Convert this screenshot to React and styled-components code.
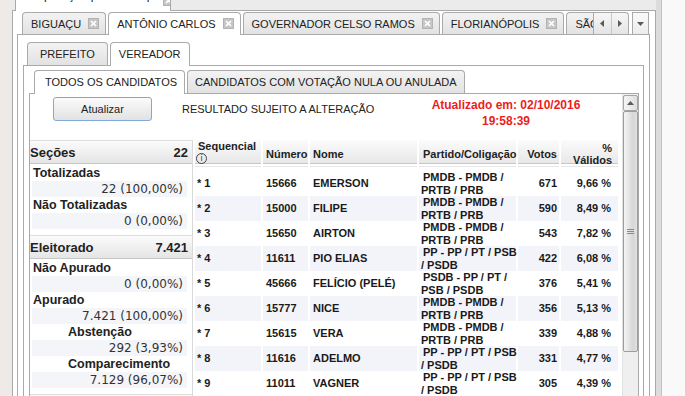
import React from 'react';
import styled, { createGlobalStyle } from 'styled-components';

const Global = createGlobalStyle`
  html, body { margin: 0; padding: 0; background: #edeae7; }
  body { font-family: "Liberation Sans", Arial, sans-serif; }
  * { box-sizing: border-box; }
`;

const Page = styled.div`
  display: flex;
  width: 685px;
  height: 396px;
  overflow: hidden;
  background: #edeae7;
`;

const Gutter = styled.div`
  width: 12px;
  flex: none;
`;

const Outer = styled.div`
  width: 644px;
  flex: none;
  display: flex;
  flex-direction: column;
`;

const OuterNav = styled.div`
  height: 11px;
  flex: none;
  display: flex;
  padding-left: 3px;
  background: #ebebeb;
  border-bottom: 1px solid #a9a9a9;
  position: relative;
  z-index: 1;
`;

const OuterTab = styled.div`
  width: 156px;
  height: 11px;
  display: flex;
  align-items: flex-end;
  justify-content: space-between;
  padding: 0 6px 9px 20px;
  background: #fff;
  border-left: 1px solid #a9a9a9;
  border-right: 1px solid #a9a9a9;
  overflow: hidden;
  font-size: 12px;
  line-height: 14px;
  color: #222;
  white-space: nowrap;
`;

const OuterClose = styled.span`
  display: inline-flex;
  margin-bottom: -4px;
`;

const OuterBody = styled.div`
  flex: 1;
  min-height: 0;
  display: flex;
  flex-direction: column;
  background: #fff;
  border-left: 1px solid #a9a9a9;
  border-right: 1px solid #a9a9a9;
  padding: 1px 5px 0 4px;
`;

const RightBand = styled.div`
  width: 6px;
  flex: none;
  background: #dcdcdc;
  border-right: 1px solid #c2c2c2;
`;

const RightFill = styled.div`
  flex: 1;
  background: #f9f9f9;
`;

const TabSet = styled.div`
  flex: 1;
  min-height: 0;
  display: flex;
  flex-direction: column;
`;

const NavRow = styled.div`
  position: relative;
  z-index: 1;
  flex: none;
  display: flex;
  height: ${p => p.$h}px;
  padding-left: ${p => p.$indent}px;
  padding-right: ${p => p.$end || 0}px;
`;

const TabList = styled.div`
  flex: 1;
  min-width: 0;
  height: calc(100% + 1px);
  display: flex;
  align-items: flex-start;
  overflow: hidden;
`;

const Tab = styled.div`
  flex: none;
  display: flex;
  align-items: center;
  height: ${p => (p.$active ? p.$h + 1 : p.$h)}px;
  padding: 0 ${p => p.$pr}px ${p => (p.$active ? 1 : 0)}px ${p => p.$pl}px;
  margin-right: 2px;
  border: 1px solid #aaaaaa;
  border-bottom: none;
  border-radius: 4px 4px 0 0;
  background: ${p => (p.$active ? '#ffffff' : 'linear-gradient(to bottom, #f3f3f3, #e2e2e2)')};
  font-size: 11px;
  color: #222;
  white-space: nowrap;
`;

const CloseBox = styled.span`
  display: inline-flex;
  margin-left: ${p => p.$gap}px;
`;

const TabPanel = styled.div`
  flex: 1;
  min-height: 0;
  display: flex;
  flex-direction: column;
  background: #fff;
  border: 1px solid #aaaaaa;
  border-bottom: none;
  padding: ${p => p.$pad};
`;

const ScrollArrows = styled.div`
  position: absolute;
  left: 576px;
  top: 0;
  width: 36px;
  height: 22px;
  display: flex;
  border: 1px solid #aaaaaa;
  border-bottom: none;
  border-radius: 0 4px 0 0;
  background: linear-gradient(to bottom, #f6f6f6, #e4e4e4);
`;

const ArrowHalf = styled.div`
  flex: 1;
  display: flex;
  align-items: center;
  justify-content: center;
  border-left: ${p => (p.$sep ? '1px solid #c8c8c8' : 'none')};
`;

const MenuButton = styled.div`
  position: absolute;
  left: 615px;
  top: 0;
  width: 17px;
  height: 22px;
  display: flex;
  align-items: center;
  justify-content: center;
  border: 1px solid #aaaaaa;
  border-bottom: none;
  background: linear-gradient(to bottom, #fafafa, #ececec);
`;

const ScrollView = styled.div`
  flex: 1;
  min-height: 0;
  display: flex;
`;

const ScrollContent = styled.div`
  flex: 1;
  min-width: 0;
  overflow: hidden;
  display: flex;
  flex-direction: column;
`;

const TopBar = styled.div`
  height: 46px;
  flex: none;
  display: flex;
  align-items: flex-start;
  padding: 3px 0 0 23px;
`;

const Button = styled.button`
  width: 99px;
  height: 24px;
  flex: none;
  border: 1px solid #7ea9d9;
  border-radius: 3px;
  background: linear-gradient(to bottom, #fbfbfb, #e2e2e2);
  font-family: "Liberation Sans", Arial, sans-serif;
  font-size: 11px;
  color: #222;
  padding: 0;
`;

const Notice = styled.div`
  margin-left: 30px;
  line-height: 24px;
  font-size: 11px;
  color: #222;
  white-space: nowrap;
`;

const Updated = styled.div`
  width: 180px;
  margin-left: auto;
  margin-right: 26px;
  text-align: center;
  color: #ee1d1d;
  font-weight: bold;
  font-size: 12px;
  line-height: 16px;
`;

const Main = styled.div`
  flex: 1;
  display: flex;
  align-items: flex-start;
`;

const Stats = styled.div`
  width: 163px;
  flex: none;
  align-self: stretch;
  border-right: 1px solid #d9d9d9;
`;

const StatHeader = styled.div`
  height: 24px;
  display: flex;
  justify-content: space-between;
  align-items: center;
  padding-right: 4px;
  border-top: 1px solid #dddddd;
  border-bottom: 1px solid #c6c6c6;
  background: linear-gradient(to bottom, #fbfbfb, #e5e5e5);
  font-weight: bold;
  font-size: 13px;
  color: #222;
`;

const StatGroup = styled.div`
  padding: 1px 5px 6px 2px;
`;

const StatLabel = styled.div`
  height: 16px;
  line-height: 16px;
  padding-left: ${p => (p.$indent ? 36 : 1)}px;
  font-weight: bold;
  font-size: 12.5px;
  color: #222;
  white-space: nowrap;
`;

const StatValue = styled.div`
  height: 16px;
  line-height: 16px;
  padding-right: 4px;
  text-align: right;
  background: #f3f5f9;
  font-family: "DejaVu Sans", Verdana, sans-serif;
  font-size: 12px;
  color: #333;
`;

const Table = styled.table`
  table-layout: fixed;
  width: 427px;
  flex: none;
  border-collapse: separate;
  border-spacing: 2px 0;
  font-family: "Liberation Sans", Arial, sans-serif;
  font-weight: bold;
  font-size: 11px;
  color: #1a1a1a;
`;

const Col = styled.col`
  width: ${p => p.$w}px;
`;

const HeadCell = styled.th`
  height: 24px;
  padding: 0 ${p => p.$pr || 0}px ${p => p.$pb ?? 2}px ${p => p.$pl ?? 3}px;
  vertical-align: bottom;
  text-align: ${p => p.$align || 'left'};
  background: linear-gradient(to bottom, #fbfbfb, #e8e8e8);
  border-bottom: 1px solid #c6c6c6;
  line-height: 13px;
  font-weight: bold;
  color: #222;
  white-space: nowrap;
`;

const HeadStack = styled.div`
  line-height: 12px;
  margin-bottom: ${p => p.$sink}px;
`;

const SpacerCell = styled.td`
  height: 7px;
  padding: 0;
  background: linear-gradient(to bottom, #fff 0 2px, #e6e6e6 2px 3px, #fff 3px);
`;

const Cell = styled.td`
  height: 25px;
  padding: 0 ${p => p.$pr || 0}px 0 ${p => p.$pl ?? 3}px;
  vertical-align: middle;
  text-align: ${p => p.$align || 'left'};
  line-height: 12.5px;
  white-space: nowrap;
  background: ${p => (p.$alt ? '#f2f4fa' : '#ffffff')};
`;

const Line = styled.span`
  display: block;
  padding-left: ${p => p.$indent || 0}px;
`;

const InfoIcon = styled.span`
  display: block;
  width: 11px;
  height: 11px;
  margin: 1px 0 0 -2px;
  border: 1px solid #444;
  border-radius: 50%;
  font-family: "DejaVu Sans", sans-serif;
  font-weight: normal;
  font-size: 8px;
  line-height: 9px;
  text-align: center;
  color: #333;
`;

const Scrollbar = styled.div`
  width: 16px;
  flex: none;
  display: flex;
  flex-direction: column;
  padding-top: 1px;
  background: #efefef;
  border-left: 1px solid #e2e2e2;
`;

const ScrollButton = styled.div`
  height: 16px;
  flex: none;
  display: flex;
  align-items: center;
  justify-content: center;
  border: 1px solid #a6a6a6;
  border-radius: 2px;
  background: linear-gradient(to right, #f5f5f5, #dedede);
`;

const Thumb = styled.div`
  height: 241px;
  flex: none;
  display: flex;
  align-items: center;
  justify-content: center;
  border: 1px solid #9c9c9c;
  border-radius: 2px;
  background: linear-gradient(to right, #f4f4f4 0%, #e6e6e6 35%, #d6d6d6 70%, #e2e2e2 100%);
`;

const CloseIcon = () => (
  <svg width="11" height="11" viewBox="0 0 11 11">
    <rect x="0.5" y="0.5" width="10" height="10" fill="#c6c6c6" stroke="#b3b3b3" />
    <path d="M3 3 L8 8 M8 3 L3 8" stroke="#ffffff" strokeWidth="1.7" />
  </svg>
);

const Tri = ({ dir }) => {
  const d = {
    left: 'M4 0 L0 3.5 L4 7 Z',
    right: 'M0 0 L4 3.5 L0 7 Z',
    down: 'M0 0 L7 0 L3.5 4 Z',
    up: 'M0 4 L7 4 L3.5 0 Z',
  }[dir];
  const horiz = dir === 'left' || dir === 'right';
  return (
    <svg width={horiz ? 4 : 7} height={horiz ? 7 : 4} viewBox={horiz ? '0 0 4 7' : '0 0 7 4'}>
      <path d={d} fill="#5a5a5a" />
    </svg>
  );
};

const Grip = () => (
  <svg width="7" height="6" viewBox="0 0 7 6">
    <path d="M0 0.5 H7 M0 2.5 H7 M0 4.5 H7" stroke="#8a8a8a" strokeWidth="1" />
  </svg>
);

const cities = [
  { name: 'BIGUAÇU' },
  { name: 'ANTÔNIO CARLOS', active: true },
  { name: 'GOVERNADOR CELSO RAMOS' },
  { name: 'FLORIANÓPOLIS' },
  { name: 'SÃO JOSÉ' },
];

const PMDB = ['PMDB - PMDB /', 'PRTB / PRB'];
const PP = ['PP - PP / PT / PSB', '/ PSDB'];

const rows = [
  ['1', '15666', 'EMERSON', PMDB, '671', '9,66 %'],
  ['2', '15000', 'FILIPE', PMDB, '590', '8,49 %'],
  ['3', '15650', 'AIRTON', PMDB, '543', '7,82 %'],
  ['4', '11611', 'PIO ELIAS', PP, '422', '6,08 %'],
  ['5', '45666', 'FELÍCIO (PELÉ)', ['PSDB - PP / PT /', 'PSB / PSDB'], '376', '5,41 %'],
  ['6', '15777', 'NICE', PMDB, '356', '5,13 %'],
  ['7', '15615', 'VERA', PMDB, '339', '4,88 %'],
  ['8', '11616', 'ADELMO', PP, '331', '4,77 %'],
  ['9', '11011', 'VAGNER', PP, '305', '4,39 %'],
];

export default function App() {
  return (
    <>
      <Global />
      <Page>
        <Gutter />
        <Outer>
          <OuterNav>
            <OuterTab>
              <span>Apuração por município</span>
              <OuterClose>
                <CloseIcon />
              </OuterClose>
            </OuterTab>
          </OuterNav>
          <OuterBody>
            <TabSet>
              <NavRow $h={22} $indent={5} $end={57}>
                <TabList>
                  {cities.map(c => (
                    <Tab key={c.name} $h={22} $active={c.active} $pl={8} $pr={6}>
                      {c.name}
                      <CloseBox $gap={7}>
                        <CloseIcon />
                      </CloseBox>
                    </Tab>
                  ))}
                </TabList>
                <ScrollArrows>
                  <ArrowHalf>
                    <Tri dir="left" />
                  </ArrowHalf>
                  <ArrowHalf $sep>
                    <Tri dir="right" />
                  </ArrowHalf>
                </ScrollArrows>
                <MenuButton>
                  <Tri dir="down" />
                </MenuButton>
              </NavRow>
              <TabPanel $pad="7px 5px 0 5px">
                <TabSet>
                  <NavRow $h={23} $indent={4}>
                    <TabList>
                      <Tab $h={23} $pl={12} $pr={12}>PREFEITO</Tab>
                      <Tab $h={23} $active $pl={8} $pr={8}>VEREADOR</Tab>
                    </TabList>
                  </NavRow>
                  <TabPanel $pad="4px 4px 0 5px">
                    <TabSet>
                      <NavRow $h={23} $indent={5}>
                        <TabList>
                          <Tab $h={23} $active $pl={10} $pr={7}>TODOS OS CANDIDATOS</Tab>
                          <Tab $h={23} $pl={7} $pr={7}>CANDIDATOS COM VOTAÇÃO NULA OU ANULADA</Tab>
                        </TabList>
                      </NavRow>
                      <TabPanel $pad="0">
                        <ScrollView>
                          <ScrollContent>
                            <TopBar>
                              <Button>Atualizar</Button>
                              <Notice>RESULTADO SUJEITO A ALTERAÇÃO</Notice>
                              <Updated>
                                Atualizado em: 02/10/2016
                                <br />
                                19:58:39
                              </Updated>
                            </TopBar>
                            <Main>
                              <Stats>
                                <StatHeader>
                                  <span>Seções</span>
                                  <span>22</span>
                                </StatHeader>
                                <StatGroup>
                                  <StatLabel>Totalizadas</StatLabel>
                                  <StatValue>22 (100,00%)</StatValue>
                                  <StatLabel>Não Totalizadas</StatLabel>
                                  <StatValue>0 (0,00%)</StatValue>
                                </StatGroup>
                                <StatHeader>
                                  <span>Eleitorado</span>
                                  <span>7.421</span>
                                </StatHeader>
                                <StatGroup>
                                  <StatLabel>Não Apurado</StatLabel>
                                  <StatValue>0 (0,00%)</StatValue>
                                  <StatLabel>Apurado</StatLabel>
                                  <StatValue>7.421 (100,00%)</StatValue>
                                  <StatLabel $indent>Abstenção</StatLabel>
                                  <StatValue>292 (3,93%)</StatValue>
                                  <StatLabel $indent>Comparecimento</StatLabel>
                                  <StatValue>7.129 (96,07%)</StatValue>
                                </StatGroup>
                                <StatHeader />
                              </Stats>
                              <Table>
                                <colgroup>
                                  <Col $w={66} />
                                  <Col $w={45} />
                                  <Col $w={107} />
                                  <Col $w={97} />
                                  <Col $w={41} />
                                  <Col $w={57} />
                                </colgroup>
                                <thead>
                                  <tr>
                                    <HeadCell $pl={3} $pb={0}>
                                      <HeadStack $sink={-1}>
                                        Sequencial
                                        <InfoIcon>i</InfoIcon>
                                      </HeadStack>
                                    </HeadCell>
                                    <HeadCell>Número</HeadCell>
                                    <HeadCell>Nome</HeadCell>
                                    <HeadCell $pl={4}>Partido/Coligação</HeadCell>
                                    <HeadCell $align="right" $pr={2}>Votos</HeadCell>
                                    <HeadCell $align="right" $pr={6} $pb={0}>
                                      <HeadStack $sink={-3}>
                                        %
                                        <br />
                                        Válidos
                                      </HeadStack>
                                    </HeadCell>
                                  </tr>
                                  <tr>
                                    <SpacerCell />
                                    <SpacerCell />
                                    <SpacerCell />
                                    <SpacerCell />
                                    <SpacerCell />
                                    <SpacerCell />
                                  </tr>
                                </thead>
                                <tbody>
                                  {rows.map((r, i) => {
                                    const alt = i % 2 === 1;
                                    return (
                                      <tr key={r[0]}>
                                        <Cell $alt={alt} $pl={2}>* {r[0]}</Cell>
                                        <Cell $alt={alt}>{r[1]}</Cell>
                                        <Cell $alt={alt}>{r[2]}</Cell>
                                        <Cell $alt={alt} $pl={2}>
                                          <Line $indent={2}>{r[3][0]}</Line>
                                          <Line>{r[3][1]}</Line>
                                        </Cell>
                                        <Cell $alt={alt} $align="right" $pr={2}>{r[4]}</Cell>
                                        <Cell $alt={alt} $align="right" $pr={7}>{r[5]}</Cell>
                                      </tr>
                                    );
                                  })}
                                </tbody>
                              </Table>
                            </Main>
                          </ScrollContent>
                          <Scrollbar>
                            <ScrollButton>
                              <Tri dir="up" />
                            </ScrollButton>
                            <Thumb>
                              <Grip />
                            </Thumb>
                          </Scrollbar>
                        </ScrollView>
                      </TabPanel>
                    </TabSet>
                  </TabPanel>
                </TabSet>
              </TabPanel>
            </TabSet>
          </OuterBody>
        </Outer>
        <RightBand />
        <RightFill />
      </Page>
    </>
  );
}
